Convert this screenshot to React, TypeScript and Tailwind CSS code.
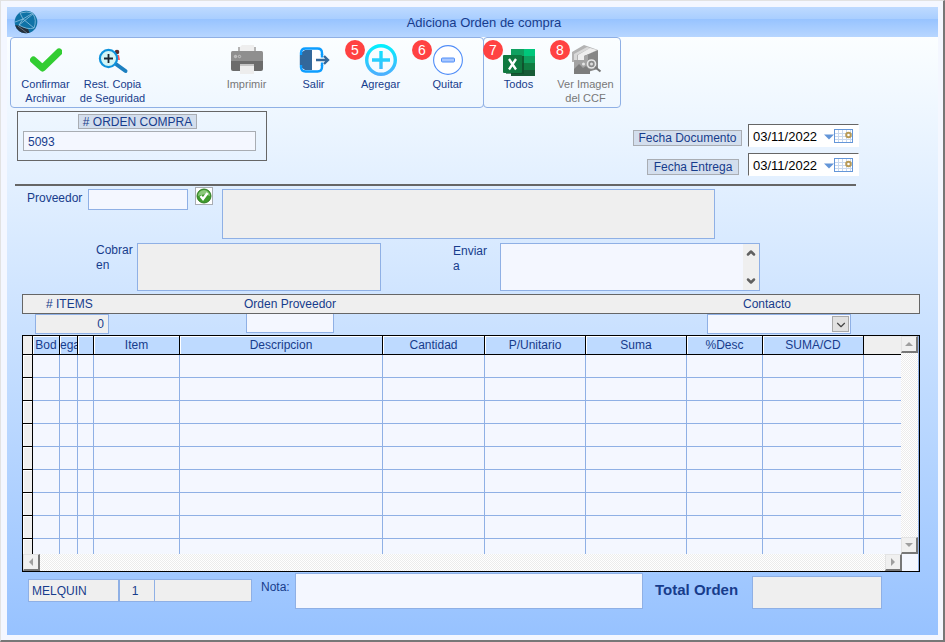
import { useState } from "react";
import type { ReactNode } from "react";
import { ChevronDown, ChevronUp } from "lucide-react";
import clsx from "clsx";

const columns = [
  { title: "Bod", width: "w-[27px]" },
  { title: "ega", width: "w-[18px]" },
  { title: "", width: "w-4" },
  { title: "Item", width: "w-[86px]" },
  { title: "Descripcion", width: "" },
  { title: "Cantidad", width: "w-[102px]" },
  { title: "P/Unitario", width: "w-[101px]" },
  { title: "Suma", width: "w-[101px]" },
  { title: "%Desc", width: "w-[76px]" },
  { title: "SUMA/CD", width: "w-[101px]" },
];

const rows = Array.from({ length: 9 }, (_, i) => i);

function GlobeLogo() {
  return (
    <svg viewBox="0 0 24 24" className="h-6 w-6" aria-hidden="true">
      <defs>
        <clipPath id="globe">
          <circle cx="12" cy="12" r="11.3" />
        </clipPath>
      </defs>
      <g clipPath="url(#globe)">
        <rect width="24" height="24" fill="#0f72a6" />
        <path d="M0 15 L4 15.500 L14 19 L16 24 L0 24 Z" fill="#26303c" />
        <g fill="none" stroke="#8fc3e0" strokeWidth="0.8">
          <path d="M1 12 L9 9 L19 3 M9 9 L6 3 M6 3 Q13 1 19 3 M9 9 L20 18 M5 15 L19 4 Q23 10 20 18 M5 15 Q13 20 20 18 M9 9 L5 15" />
          <path d="M4 16 L13 23" stroke="#6e8595" />
        </g>
      </g>
    </svg>
  );
}

function CheckIcon() {
  return (
    <svg viewBox="0 0 32 32" className="h-8 w-8" aria-hidden="true">
      <path d="M3.500 16 L12.500 24 L29 8" fill="none" stroke="#32cd32" strokeWidth="7" strokeLinecap="round" strokeLinejoin="round" />
    </svg>
  );
}

function RestoreIcon() {
  return (
    <svg viewBox="0 0 32 32" className="h-8 w-8" aria-hidden="true">
      <circle cx="20" cy="8" r="2.3" fill="#5b2d2d" />
      <path d="M19 11 L22 11 L23 16 L19 16 Z" fill="#ff5c5c" />
      <path d="M19.5 20.5 L28.5 27" stroke="#1b7fc0" strokeWidth="4" strokeLinecap="round" />
      <circle cx="11.5" cy="14.5" r="8.6" fill="#d3f6f6" stroke="#0f93dc" strokeWidth="2.2" />
      <path d="M11.5 10 V19 M7 14.5 H16" stroke="#1c2630" strokeWidth="1.8" />
    </svg>
  );
}

function PrinterIcon() {
  return (
    <svg viewBox="0 0 34 32" className="h-8 w-[34px]" aria-hidden="true">
      <rect x="8" y="3" width="18" height="7" fill="#b4b4b4" />
      <path d="M10 3 L12 1 L24 1 L24 8 L10 8 Z" fill="#eeeeee" />
      <rect x="1" y="7" width="32" height="11" rx="1.5" fill="#8f8f8f" />
      <path d="M1 17 H33 V25 Q33 27 31 27 H3 Q1 27 1 25 Z" fill="#6c6c6c" />
      <circle cx="5.5" cy="12.5" r="1.2" fill="#b5b5b5" stroke="#cfcfcf" strokeWidth="0.8" />
      <circle cx="9.5" cy="12.5" r="1.2" fill="none" stroke="#cfcfcf" strokeWidth="0.8" />
      <rect x="10" y="20" width="14" height="2" fill="#c4c4c4" />
      <rect x="10" y="22" width="14" height="8" fill="#ededed" />
    </svg>
  );
}

function ExitIcon() {
  return (
    <svg viewBox="0 0 32 32" className="h-8 w-8" aria-hidden="true">
      <rect x="4" y="5" width="20" height="22" rx="4" fill="#ffffff" />
      <path d="M4 8 L7 6 H14 V26 H7 L4 24 Z" fill="#33689b" />
      <path d="M3 11 V9 Q3 4.5 7.500 4.500 H19.500 Q24 4.500 24 9 V11 M24 21 V23 Q24 27.500 19.500 27.500 H7.500 Q3 27.500 3 23 V21" fill="none" stroke="#0c9dff" strokeWidth="2.4" />
      <path d="M3 11 V21" stroke="#33689b" strokeWidth="2.4" />
      <path d="M24 10 V13.500 M24 18.500 V22" stroke="#0c9dff" strokeWidth="2.4" />
      <path d="M18 16 H29 M26 12 L30 16 L26 20" fill="none" stroke="#33689b" strokeWidth="2.400" />
    </svg>
  );
}

function AddIcon() {
  return (
    <svg viewBox="0 0 32 32" className="h-8 w-8" aria-hidden="true">
      <defs>
        <linearGradient id="add" x1="0" y1="0" x2="0" y2="32" gradientUnits="userSpaceOnUse">
          <stop offset="0" stopColor="#00f2fe" />
          <stop offset="1" stopColor="#4facfe" />
        </linearGradient>
      </defs>
      <circle cx="16" cy="16" r="14.300" fill="none" stroke="url(#add)" strokeWidth="3.400" />
      <path d="M14.300 7 H17.700 V14.300 H25 V17.700 H17.700 V25 H14.300 V17.700 H7 V14.300 H14.300 Z" fill="url(#add)" />
    </svg>
  );
}

function RemoveIcon() {
  return (
    <svg viewBox="0 0 32 32" className="h-8 w-8" aria-hidden="true">
      <circle cx="16" cy="16" r="14.400" fill="#ffffff" stroke="#518ef8" strokeWidth="1.100" />
      <rect x="9.500" y="14" width="13" height="4" rx="1" fill="#a8c7ff" stroke="#518ef8" />
    </svg>
  );
}

function ExcelIcon() {
  return (
    <svg viewBox="0 0 32 32" className="h-8 w-8" aria-hidden="true">
      <rect x="8" y="5" width="24" height="29" rx="1" fill="#185c37" />
      <rect x="8" y="5" width="13" height="8" fill="#10a060" />
      <rect x="21" y="5" width="11" height="8" fill="#00c77b" />
      <rect x="8" y="12" width="13" height="7" fill="#107c41" />
      <rect x="21" y="12" width="11" height="7" fill="#10a060" />
      <rect x="21" y="19" width="11" height="7" fill="#107c41" />
      <rect x="3" y="12" width="18" height="18" fill="#0b4a27" opacity="0.6" />
      <rect x="0" y="11" width="19" height="18" rx="1" fill="#0f783f" />
      <path d="M6 15 L13 25.500 M13 15 L6 25.500" stroke="#ffffff" strokeWidth="2.300" />
    </svg>
  );
}

function ImageIcon() {
  return (
    <svg viewBox="0 0 32 32" className="h-8 w-8" aria-hidden="true">
      <path d="M2 8 L14 1 L28 6 L14 12 L14 18 L2 18 Z" fill="#b3b3b3" />
      <path d="M4 10 L17 3 L20 4 L7 11 V17 H4 Z" fill="#d9d9d9" />
      <path d="M8 11 L20 4 L27 6 L15 12 V18 H8 Z" fill="#eeeeee" />
      <path d="M14 12 L28 6 V25 L14 29 Z" fill="#868686" />
      <path d="M14 12 L18 10.500 V28 L14 29 Z" fill="#a4a4a4" />
      <rect x="4" y="16" width="15" height="14" fill="#a3a3a3" />
      <path d="M4 25 L9 20 L13 24 L16 22 L20 26 V30 H4 Z" fill="#7d7d7d" />
      <circle cx="13.500" cy="20" r="1.500" fill="#e5e5e5" />
      <circle cx="21.500" cy="20" r="4" fill="#8b8b8b" stroke="#e6e6e6" strokeWidth="1.600" />
      <circle cx="21.500" cy="20" r="1.500" fill="#dddddd" />
      <path d="M25 23 L30.500 27.500" stroke="#777777" strokeWidth="2.200" />
    </svg>
  );
}

function ToolButton({ icon, label, badge, disabled }: { icon: ReactNode; label: string; badge?: number; disabled?: boolean }) {
  return (
    <button
      type="button"
      disabled={disabled}
      className={clsx(
        "relative flex w-[67px] flex-col items-center gap-px pt-1.5 text-[11px] leading-[14px]",
        disabled ? "text-[#777777]" : "text-[#173c8c]"
      )}
    >
      {icon}
      <span className="whitespace-pre">{label}</span>
      {badge && (
        <span className="absolute -left-0.5 top-0.5 flex h-5 w-5 items-center justify-center rounded-full bg-[#ff4242] text-sm text-white">
          {badge}
        </span>
      )}
    </button>
  );
}

function DateField({ id, label, value, onChange, className }: { id: string; label: string; value: string; onChange: (v: string) => void; className: string }) {
  return (
    <div className="flex items-center">
      <label htmlFor={id} className={clsx("mt-1 flex h-4 items-center justify-center whitespace-nowrap border border-[#a9adb3] bg-[#d3deed] leading-none", className)}>
        {label}
      </label>
      <div className="flex h-[23px] w-[111px] items-center border border-white border-l-[#666666] border-t-[#666666] bg-white">
        <input id={id} value={value} onChange={(e) => onChange(e.target.value)} className="h-full w-[75px] pl-1 pt-0.5 text-[13px] text-black outline-none" />
        <button type="button" aria-label={`Abrir calendario: ${label}`}>
          <svg viewBox="0 0 30 14" className="h-[14px] w-[30px]" aria-hidden="true">
            <path d="M0 5.500 H10 L5 10.500 Z" fill="#6496d8" />
            <rect x="10.500" y="0.500" width="18" height="13" fill="#ffffff" stroke="#6496d8" />
            <path d="M14.500 1 V13 M18.500 1 V13 M22.500 1 V13 M26.500 1 V13 M11 4.500 H28 M11 7.500 H28 M11 10.500 H28" stroke="#c9d9ee" />
            <circle cx="24.500" cy="6" r="2.300" fill="#ffffff" stroke="#b89a55" strokeWidth="2" />
          </svg>
        </button>
      </div>
    </div>
  );
}

function ScrollButton({ label, path }: { label: string; path: string }) {
  return (
    <button type="button" aria-label={label} className="flex h-[17px] w-[17px] shrink-0 items-center justify-center border-b-2 border-r-2 border-t border-l border-b-[#777777] border-r-[#777777] border-t-[#e3e3e3] border-l-[#e3e3e3] bg-[#f0f0f0]">
      <svg viewBox="0 0 8 8" className="h-2 w-2" aria-hidden="true">
        <path d={path} fill="#9f9f9f" />
      </svg>
    </button>
  );
}

export default function App() {
  const [orden, setOrden] = useState("5093");
  const [documento, setDocumento] = useState("03/11/2022");
  const [entrega, setEntrega] = useState("03/11/2022");

  const field = "border border-[#8fb0e5] bg-[#f4f7ff] outline-none";
  const locked = "border border-[#8fb0e5] bg-[#efefef] outline-none";
  const track = "bg-[repeating-conic-gradient(#ececec_0_25%,#ffffff_0_50%)] bg-[length:2px_2px]";

  return (
    <div className="flex min-h-screen flex-col border-b-2 border-l border-r-2 border-t border-b-[#777777] border-l-[#e2e2e2] border-r-[#777777] border-t-[#e2e2e2] bg-[#f4f7ff] pb-[5px] pl-1.5 pr-[5px] pt-1.5 font-['Liberation_Sans',Arial,sans-serif] text-xs leading-[15px] text-[#173c8c]">
      <header className="flex h-[30px] items-center bg-[linear-gradient(#bedaff_0,#a9ceff_12px,#97c3ff_12px,#b7d6ff_100%)] pl-[7px]">
        <GlobeLogo />
        <h1 className="flex-1 pr-2 text-center text-[13px]">Adiciona Orden de compra</h1>
      </header>

      <main className="flex flex-1 flex-col bg-linear-to-b from-[#fbfeff] to-[#97c2ff]">
        <div className="flex pl-[3px]">
          <div className="flex h-[71px] rounded border border-[#8fb0e5] pl-px pr-0.5">
            <ToolButton icon={<CheckIcon />} label={"Confirmar\nArchivar"} />
            <ToolButton icon={<RestoreIcon />} label={"Rest. Copia\nde Seguridad"} />
            <div className="w-[67px]" />
            <ToolButton icon={<PrinterIcon />} label="Imprimir" disabled />
            <ToolButton icon={<ExitIcon />} label="Salir" />
            <ToolButton icon={<AddIcon />} label="Agregar" badge={5} />
            <ToolButton icon={<RemoveIcon />} label="Quitar" badge={6} />
          </div>
          <div className="-ml-px flex h-[71px] rounded border border-[#8fb0e5] px-px">
            <ToolButton icon={<ExcelIcon />} label="Todos" badge={7} />
            <ToolButton icon={<ImageIcon />} label={"Ver Imagen\ndel CCF"} badge={8} disabled />
          </div>
        </div>

        <div className="flex items-start justify-between pl-2.5 pr-[79px] pt-[3px]">
          <div className="flex h-[50px] w-[250px] flex-col border border-[#666666] pl-[5px] pr-2.5 pt-0.5">
            <label htmlFor="orden" className="mr-1 flex h-[15px] w-[119px] items-center justify-center self-center whitespace-nowrap border border-[#a9adb3] bg-[#d3deed] leading-none">
              # ORDEN COMPRA
            </label>
            <input id="orden" value={orden} onChange={(e) => setOrden(e.target.value)} className="mt-0.5 h-5 border border-[#a9adb3] bg-[#f4f7ff] pl-1 pt-0.5 outline-none" />
          </div>
          <div className="flex flex-col items-end gap-1.5 pt-[13px]">
            <DateField id="documento" label="Fecha Documento" value={documento} onChange={setDocumento} className="mr-1.5 w-[109px]" />
            <DateField id="entrega" label="Fecha Entrega" value={entrega} onChange={setEntrega} className="mr-[9px] w-[92px]" />
          </div>
        </div>

        <hr className="ml-2 mr-[82px] mt-2 h-0.5 border-0 bg-[#666666]" />

        <div className="mt-px flex items-start pl-5 pr-[223px]">
          <label htmlFor="proveedor" className="mt-1 w-[61px]">Proveedor</label>
          <input id="proveedor" className={clsx(field, "mt-0.5 h-[21px] w-[100px]")} />
          <button type="button" aria-label="Validar proveedor" className="ml-[7px] flex h-[18px] w-[18px] items-center justify-center border border-[#a9adb3] bg-white">
            <svg viewBox="0 0 16 16" className="h-4 w-4" aria-hidden="true">
              <circle cx="8" cy="8" r="7" fill="#3f9a2c" stroke="#2f7d22" />
              <path d="M2 8 A6 6 0 0 1 14 8 Q8 5 2 8 Z" fill="#8cc97b" />
              <path d="M4.500 8 L7 11 L11.500 5" fill="none" stroke="#ffffff" strokeWidth="2.400" />
            </svg>
          </button>
          <textarea aria-label="Datos del proveedor" readOnly className={clsx(locked, "ml-[9px] mt-0.5 h-[50px] flex-1 resize-none")} />
        </div>

        <div className="mt-1 flex items-start pl-[89px] pr-[178px]">
          <label htmlFor="cobrar" className="w-[41px]">Cobrar<br />en</label>
          <textarea id="cobrar" readOnly className={clsx(locked, "h-12 flex-1 resize-none")} />
          <label htmlFor="enviar" className="ml-[72px] mt-px w-[47px]">Enviar<br />a</label>
          <div className={clsx(field, "flex h-12 w-[260px]")}>
            <textarea id="enviar" className="h-full flex-1 resize-none outline-none" />
            <div className="flex w-4 flex-col items-center justify-between bg-[#efefef] py-[3px] text-[#606060]">
              <button type="button" aria-label="Subir"><ChevronUp size={12} strokeWidth={5} /></button>
              <button type="button" aria-label="Bajar"><ChevronDown size={12} strokeWidth={5} /></button>
            </div>
          </div>
        </div>

        <div className="ml-[15px] mr-[18px] mt-[3px]">
          <div className="grid h-5 grid-cols-[12px_74px_137px_88px_1fr_144px_68px] items-center border border-[#666666] bg-[#efefef]">
            <label htmlFor="items" className="col-start-2 pl-[11px]"># ITEMS</label>
            <label htmlFor="ordenProveedor" className="col-start-4 flex justify-center whitespace-nowrap">Orden Proveedor</label>
            <label htmlFor="contacto" className="col-start-6 pl-9">Contacto</label>
          </div>
          <div className="grid grid-cols-[13px_74px_137px_88px_1fr_144px_69px]">
            <input id="items" value="0" readOnly className={clsx(locked, "col-start-2 h-5 w-full pr-1 text-right")} />
            <input id="ordenProveedor" className={clsx(field, "col-start-4 h-[19px] w-full border-t-0")} />
            <div className="relative col-start-6">
              <select id="contacto" className={clsx(field, "h-5 w-full appearance-none")} />
              <span className="pointer-events-none absolute right-0.5 top-0.5 flex h-4 w-[17px] items-center justify-center border border-[#a9a9a9] bg-[#e1e1e1] pt-0.5 text-[#444444]">
                <ChevronDown size={14} strokeWidth={2} />
              </span>
            </div>
          </div>

          <div className="mt-px border border-black bg-[#f4f7ff]">
            <div className="flex h-[218px] border-r border-[#8fb0e5]">
              <div className="min-w-0 flex-1 overflow-hidden">
                <table className="w-full table-fixed border-separate border-spacing-0">
                  <thead>
                    <tr className="h-[19px]">
                      <th aria-label="Fila" className="w-2.5 border-b border-r border-black bg-[#efefef] p-0" />
                      {columns.map((col, i) => (
                        <th key={i} className={clsx("overflow-hidden whitespace-nowrap border-b border-r border-black bg-[#bedaff] p-0 font-normal shadow-[inset_1px_1px_#ffffff]", col.width)}>
                          {col.title}
                        </th>
                      ))}
                      <th aria-label="Resto" className="w-[37px] border-b border-black bg-[#efefef] p-0" />
                    </tr>
                  </thead>
                  <tbody>
                    {rows.map((row) => (
                      <tr key={row} className="h-[23px]">
                        <td className="border-b border-r border-black bg-[#efefef] p-0 shadow-[inset_1px_1px_#ffffff]" />
                        {columns.map((_, i) => (
                          <td key={i} className="border-b border-r border-[#8fb0e5] p-0" />
                        ))}
                        <td className="border-b border-[#8fb0e5] p-0" />
                      </tr>
                    ))}
                  </tbody>
                </table>
              </div>
              <div className={clsx("flex w-[17px] flex-col justify-between", track)}>
                <ScrollButton label="Desplazar arriba" path="M0 6 L4 2 L8 6 Z" />
                <ScrollButton label="Desplazar abajo" path="M0 2 L4 6 L8 2 Z" />
              </div>
            </div>
            <div className="flex border-r border-[#8fb0e5] pr-4">
              <div className={clsx("flex flex-1 justify-between", track)}>
                <ScrollButton label="Desplazar a la izquierda" path="M6 0 L2 4 L6 8 Z" />
                <ScrollButton label="Desplazar a la derecha" path="M2 0 L6 4 L2 8 Z" />
              </div>
            </div>
          </div>
        </div>

        <footer className="mt-px flex items-start pl-[21px] pr-14">
          <input aria-label="Usuario" value="MELQUIN" readOnly className={clsx(locked, "mt-1.5 h-[23px] w-[91px] pl-[3px]")} />
          <input aria-label="Bodega" value="1" readOnly className={clsx(locked, "mt-1.5 h-[23px] w-9 pr-1 text-center")} />
          <input aria-label="Estado" readOnly className={clsx(locked, "-ml-px mt-1.5 h-[23px] w-[98px]")} />
          <label htmlFor="nota" className="ml-[9px] mt-[7px] w-[34px]">Nota:</label>
          <textarea id="nota" className={clsx(field, "h-9 flex-1 resize-none")} />
          <label htmlFor="total" className="ml-3 mt-2 w-[97px] text-[15px] font-bold leading-[18px]">Total Orden</label>
          <input id="total" readOnly className={clsx(locked, "mt-[3px] h-[33px] w-[130px]")} />
        </footer>
      </main>
    </div>
  );
}
